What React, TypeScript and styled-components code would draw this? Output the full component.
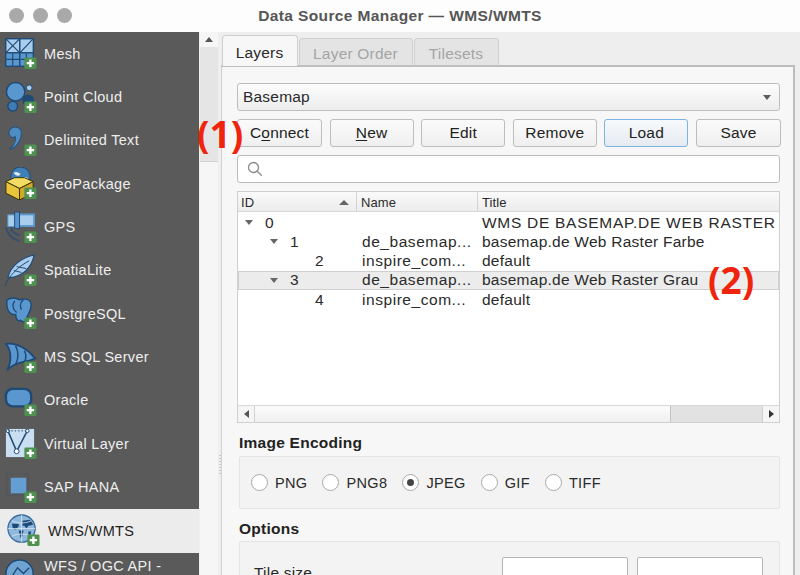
import React from "react";
import styled, { createGlobalStyle } from "styled-components";

const Global = createGlobalStyle`
  html, body { margin: 0; padding: 0; background: #f0f0f0; overflow: hidden; }
  * { box-sizing: border-box; }
`;

const Window = styled.div`
  position: relative;
  width: 800px;
  height: 575px;
  overflow: hidden;
  display: flex;
  flex-direction: column;
  font-family: "Liberation Sans", Arial, sans-serif;
  font-size: 15.5px;
  letter-spacing: 0.2px;
  color: #2a2a2a;
`;
const TitleBar = styled.header`
  position: relative;
  height: 32px;
  flex: none;
  display: flex;
  align-items: center;
  justify-content: center;
  background: #fdfdfd;
  color: #565656;
  font-weight: 700;
  font-size: 15.5px;
  letter-spacing: 0.38px;
`;
const Lights = styled.div`
  position: absolute;
  left: 9px;
  top: 8px;
  display: flex;
  gap: 9px;
`;
const Light = styled.span`
  width: 15px;
  height: 15px;
  border-radius: 50%;
  background: #a9a9a9;
`;
const Body = styled.div`
  flex: 1;
  min-height: 0;
  display: flex;
`;
const Sidebar = styled.nav`
  width: 199px;
  flex: none;
  background: #5a5a5a;
  overflow: hidden;
`;
const Item = styled.div<{ $active?: boolean }>`
  height: ${(p) => (p.$active ? "44px" : "43.35px")};
  display: flex;
  align-items: center;
  gap: ${(p) => (p.$active ? "8px" : "7px")};
  padding-left: ${(p) => (p.$active ? "7px" : "4px")};
  background: ${(p) => (p.$active ? "#ececec" : "transparent")};
  color: ${(p) => (p.$active ? "#1f1f1f" : "#eeeeee")};
  font-size: 14.5px;
  letter-spacing: 0.3px;
  line-height: 17px;
  white-space: nowrap;
  flex: none;
`;
const ItemLabel = styled.span`
  display: block;
  padding-top: 1px;
`;
const IconSvg = styled.svg`
  width: 33px;
  height: 33px;
  flex: none;
`;
const SideScroll = styled.div`
  width: 18px;
  flex: none;
  background: #f6f6f6;
  margin-left: 1px;
  display: flex;
  flex-direction: column;
`;
const ScrollUp = styled.div`
  height: 15px;
  display: flex;
  align-items: center;
  justify-content: center;
  &::before {
    content: "";
    border-left: 4.5px solid transparent;
    border-right: 4.5px solid transparent;
    border-bottom: 5px solid #555;
  }
`;
const ScrollThumb = styled.div`
  height: 115px;
  background: #e5e5e5;
  border-bottom: 1px solid #d2d2d2;
`;
const Splitter = styled.div`
  width: 3px;
  flex: none;
  background: #efefef;
  display: flex;
  justify-content: center;
`;
const Grip = styled.div`
  width: 2px;
  height: 20px;
  margin-top: 423px;
  background: repeating-linear-gradient(#c8c8c8 0 1px, transparent 1px 3px);
`;
const Main = styled.main`
  flex: 1;
  min-width: 0;
  background: #eeeeee;
  padding: 4px 5px 0 0;
  display: flex;
  flex-direction: column;
`;
const Tabs = styled.div`
  height: 30px;
  flex: none;
  display: flex;
  align-items: flex-end;
  gap: 1px;
  padding-left: 1px;
  position: relative;
  z-index: 1;
  margin-bottom: -1px;
`;
const Tab = styled.div<{ $active?: boolean; $w: number }>`
  width: ${(p) => p.$w}px;
  height: ${(p) => (p.$active ? "31px" : "28px")};
  padding: 3px 1px 0 0;
  display: flex;
  align-items: center;
  justify-content: center;
  color: ${(p) => (p.$active ? "#2a2a2a" : "#a4a4a4")};
  background: ${(p) => (p.$active ? "#f7f7f7" : "#e4e4e4")};
  border: 1px solid #cfcfcf;
  border-bottom: ${(p) => (p.$active ? "none" : "1px solid #c0c0c0")};
  border-radius: 4px 4px 0 0;
`;
const Pane = styled.section`
  flex: 1;
  min-height: 0;
  background: #f7f7f7;
  border: 1px solid #d0d0d0;
  border-top: 2px solid #bcbcbc;
  border-right: 2px solid #bcbcbc;
  border-bottom: none;
  padding: 16px 13px 0 15px;
  display: flex;
  flex-direction: column;
  overflow: hidden;
`;
const Combo = styled.div`
  height: 28px;
  flex: none;
  display: flex;
  align-items: center;
  justify-content: space-between;
  padding: 0 7px 0 5px;
  border: 1px solid #bdbdbd;
  border-radius: 3px;
  background: linear-gradient(#fcfcfc, #ededed);
  &::after {
    content: "";
    border-left: 4.5px solid transparent;
    border-right: 4.5px solid transparent;
    border-top: 5px solid #5c5c5c;
    margin-right: 1px;
  }
`;
const Buttons = styled.div`
  margin-top: 8px;
  width: 544px;
  flex: none;
  display: grid;
  grid-template-columns: 85px 84px 84px 84px 84px 85px;
  column-gap: 7.6px;
`;
const Button = styled.button<{ $primary?: boolean }>`
  height: 28px;
  padding: 0;
  font: inherit;
  letter-spacing: inherit;
  color: #222;
  border-radius: 3px;
  border: 1px solid ${(p) => (p.$primary ? "#7db3e0" : "#bdbdbd")};
  background: ${(p) => (p.$primary ? "linear-gradient(#f7f9fb, #e6ebf1)" : "linear-gradient(#fbfbfb, #efefef)")};
  display: flex;
  align-items: center;
  justify-content: center;
`;
const Mnemonic = styled.span`
  text-decoration: underline;
  text-underline-offset: 2px;
  text-decoration-thickness: 1px;
`;
const Search = styled.div`
  margin-top: 8px;
  height: 28px;
  flex: none;
  background: #fff;
  border: 1px solid #bdbdbd;
  border-radius: 3px;
  display: flex;
  align-items: center;
  padding-left: 9px;
  color: #8a8a8a;
`;
const Tree = styled.div`
  margin-top: 8px;
  height: 232px;
  flex: none;
  background: #fff;
  border: 1px solid #d0d0d0;
  display: flex;
  flex-direction: column;
`;
const Header = styled.div`
  height: 20px;
  flex: none;
  display: grid;
  grid-template-columns: 119px 121px 1fr;
  background: linear-gradient(#fafafa, #ececec);
  border-bottom: 1px solid #d8d8d8;
  font-size: 13px;
  letter-spacing: 0.1px;
  margin-bottom: 1px;
`;
const HeadCell = styled.div`
  display: flex;
  align-items: center;
  justify-content: space-between;
  padding: 1px 7px 0 3px;
  border-right: 1px solid #d4d4d4;
  &:nth-child(n + 2) { padding-left: 4px; }
  &:last-child { border-right: none; }
`;
const SortUp = styled.span`
  border-left: 5px solid transparent;
  border-right: 5px solid transparent;
  border-bottom: 5px solid #666;
`;
const Rows = styled.div`
  flex: 1;
  min-height: 0;
`;
const Row = styled.div<{ $sel?: boolean }>`
  height: 19.25px;
  display: grid;
  grid-template-columns: 120px 120px 1fr;
  align-items: center;
  white-space: nowrap;
  background: ${(p) => (p.$sel ? "#ececec" : "transparent")};
  box-shadow: ${(p) => (p.$sel ? "inset 0 0 0 1px #cfcfcf" : "none")};
`;
const IdCell = styled.div<{ $depth: number }>`
  display: flex;
  align-items: center;
  padding-left: ${(p) => 7 + p.$depth * 25}px;
`;
const Twisty = styled.span<{ $hidden?: boolean }>`
  width: 0;
  height: 0;
  flex: none;
  margin-right: 12px;
  border-left: 4.5px solid transparent;
  border-right: 4.5px solid transparent;
  border-top: 5px solid ${(p) => (p.$hidden ? "transparent" : "#666")};
`;
const NameCell = styled.div`
  padding-left: 4px;
  letter-spacing: 0.55px;
`;
const TitleCell = styled.div<{ $caps?: boolean }>`
  padding-left: 4px;
  letter-spacing: ${(p) => (p.$caps ? "0.72px" : "0.25px")};
`;
const HScroll = styled.div`
  height: 17px;
  flex: none;
  display: flex;
  border-top: 1px solid #d8d8d8;
`;
const HArrow = styled.div<{ $dir: "l" | "r" }>`
  width: 17px;
  flex: none;
  display: flex;
  align-items: center;
  justify-content: center;
  background: #f5f5f5;
  border-${(p) => (p.$dir === "l" ? "right" : "left")}: 1px solid #d0d0d0;
  &::before {
    content: "";
    border-top: 4.5px solid transparent;
    border-bottom: 4.5px solid transparent;
    ${(p) => (p.$dir === "l" ? "border-right: 5px solid #555;" : "border-left: 5px solid #333;")}
  }
`;
const HThumb = styled.div`
  width: 416px;
  flex: none;
  background: linear-gradient(#fbfbfb, #f0f0f0);
  border-right: 1px solid #c4c4c4;
`;
const HTrough = styled.div`
  flex: 1;
  background: #e2e2e2;
`;
const GroupLabel = styled.div<{ $top: number }>`
  font-weight: 700;
  font-size: 15.5px;
  letter-spacing: 0.25px;
  color: #222;
  margin: ${(p) => p.$top}px 0 0 2px;
  line-height: 17px;
`;
const GroupBox = styled.div`
  margin-left: 2px;
  background: #f3f3f3;
  border: 1px solid #e4e4e4;
  border-radius: 2px;
  flex: none;
`;
const EncodingBox = styled(GroupBox)`
  margin-top: 5px;
  height: 53px;
  display: flex;
  align-items: center;
  padding-left: 11px;
  gap: 15px;
  font-size: 14.5px;
  letter-spacing: 0.35px;
`;
const RadioItem = styled.label`
  display: flex;
  align-items: center;
  gap: 7px;
`;
const RadioDot = styled.span<{ $on?: boolean }>`
  width: 17px;
  height: 17px;
  border-radius: 50%;
  background: #fff;
  border: 1px solid #a8a8a8;
  display: flex;
  align-items: center;
  justify-content: center;
  &::after {
    content: "";
    width: 7px;
    height: 7px;
    border-radius: 50%;
    background: ${(p) => (p.$on ? "#444" : "transparent")};
  }
`;
const OptionsBox = styled(GroupBox)`
  margin-top: 4px;
  height: 60px;
  padding: 15px 16px 0 14px;
  display: flex;
  justify-content: space-between;
  align-items: flex-start;
`;
const TileLabel = styled.span`
  margin-top: 7px;
  line-height: 17px;
`;
const TileInputs = styled.div`
  display: flex;
  gap: 9px;
`;
const TileInput = styled.div`
  width: 126px;
  height: 30px;
  background: #fff;
  border: 1px solid #b4b4b4;
  border-radius: 2px;
`;
const Note = styled.span<{ $x: number; $y: number }>`
  position: absolute;
  left: ${(p) => p.$x}px;
  top: ${(p) => p.$y}px;
  font-family: "Open Sans", sans-serif;
  font-weight: 700;
  font-size: 37px;
  line-height: 40px;
  letter-spacing: 0;
  color: #f0240c;
`;

const Plus = () => (
  <g>
    <rect x="21" y="21" width="12.5" height="12" rx="1.5" fill="#4f9150" />
    <path d="M27.2 23.2v7.6M23.4 27h7.6" stroke="#fff" strokeWidth="2.4" />
  </g>
);
const DARK = "#1f4a75";
const MID = "#5b97cf";
const LIGHT = "#a9cdec";

const icons: Record<string, React.ReactNode> = {
  mesh: (
    <>
      <rect x="1" y="1" width="30" height="30" rx="1" fill={DARK} />
      <rect x="2.5" y="2.5" width="13" height="13" fill={LIGHT} />
      <rect x="17" y="2.5" width="12.5" height="13" fill={LIGHT} />
      <rect x="2.5" y="17" width="13" height="12.5" fill={MID} />
      <rect x="17" y="17" width="12.5" height="12.5" fill={MID} />
      <path d="M2.5 2.5l13 13M15.5 2.5l-13 13M29.5 2.5l-12.5 13M2.5 23h13M9 17v12.5M17 23h12M23 17v12" stroke={DARK} strokeWidth="1.2" fill="none" />
    </>
  ),
  cloud: (
    <>
      <circle cx="12" cy="11" r="9.5" fill={MID} stroke={DARK} strokeWidth="1.5" />
      <circle cx="26" cy="7" r="3" fill={LIGHT} stroke={DARK} />
      <circle cx="9" cy="26" r="5" fill="#3f7cb5" stroke={DARK} strokeWidth="1.5" />
      <circle cx="25" cy="20" r="6" fill={DARK} />
    </>
  ),
  text: (
    <path d="M5 9a6.500 6 0 0 1 13 0c0 7-4 14-11 17-1 .5-1.500-.5-.5-1 4-3 6-8 5-12-3 2-6.500 0-6.500-4z" fill="#4e8cc4" stroke="#24527f" strokeWidth="1.1" />
  ),
  gpkg: (
    <>
      <circle cx="17" cy="10" r="10" fill="#3f7fb8" stroke={DARK} />
      <path d="M10 6c3-2 5 0 7 1-1 3-5 3-7-1zM20 11c3-1 5 0 5 2-2 3-5 2-5-2z" fill="#dfeaf4" />
      <path d="M2 15l14 7v12L2 27z" fill="#e7c43a" stroke="#3a3000" />
      <path d="M30 15l-14 7v12l14-7z" fill="#d2a92a" stroke="#3a3000" />
      <path d="M2 15l9-4 10 0 9 4-14 7z" fill="#f3dc63" stroke="#3a3000" />
    </>
  ),
  gps: (
    <>
      <rect x="4" y="4" width="8" height="12" fill={LIGHT} stroke={MID} />
      <rect x="15" y="3.500" width="16" height="12" fill={LIGHT} stroke={MID} strokeWidth="2" />
      <rect x="11" y="1" width="5" height="17" fill={MID} stroke={DARK} />
      <path d="M2 17c1 6 6 12 14 14M7 17c1 4 4 7 9 8" stroke="#34506e" strokeWidth="2" fill="none" />
    </>
  ),
  spatia: (
    <>
      <path d="M4 24C7 12 18 4 31 1c-2 10-8 20-22 23z" fill={LIGHT} stroke={DARK} strokeWidth="1.2" />
      <path d="M1 33C4 24 14 13 26 7M10 17l8 2M13 13l10 2" stroke={DARK} strokeWidth="1" fill="none" />
    </>
  ),
  pg: (
    <>
      <path d="M3 3c5-3 10-2 13 0 5-2 12-1 12 5 0 8-4 10-5 15-1 3-4 3-6 1-2 2-5-1-5-6-5 1-10-3-9-15z" fill={MID} stroke={DARK} strokeWidth="1.5" />
      <path d="M11 4c-3 4-2 9 2 12M20 3c-3 2-4 6-2 10" stroke={DARK} strokeWidth="1.4" fill="none" />
    </>
  ),
  mssql: (
    <>
      <path d="M2 3c12-2 24 7 30 15-6 3-10 3-14 4-5 1-11 4-15 8 5-8 5-20-1-27z" fill={MID} stroke={DARK} strokeWidth="1.8" />
      <path d="M12 5c3 6 3 13 0 19M21 10c2 4 2 8 0 12" stroke={DARK} strokeWidth="1.5" fill="none" />
    </>
  ),
  oracle: <rect x="2" y="5" width="26" height="18" rx="7" fill={MID} stroke={DARK} strokeWidth="2.4" />,
  virtual: (
    <>
      <rect x="2" y="2" width="29" height="29" fill="#c9def0" />
      <path d="M4 4l9 21L24 4" stroke={DARK} strokeWidth="1.6" fill="none" />
      <circle cx="13" cy="25" r="2.5" fill="#fff" stroke={DARK} />
      <circle cx="4" cy="4" r="1.8" fill="#fff" stroke={DARK} />
      <circle cx="24" cy="4" r="1.8" fill="#fff" stroke={DARK} />
      <path d="M4 4h20" stroke={DARK} strokeDasharray="1.5 2" />
    </>
  ),
  hana: (
    <>
      <rect x="3" y="3" width="22" height="22" fill="none" stroke="#45525e" strokeDasharray="1.5 1.5" />
      <rect x="7" y="7" width="16" height="16" fill="#659ed3" />
    </>
  ),
  wms: (
    <>
      <circle cx="15" cy="15" r="14" fill="#8fb8dc" stroke="#3b6f9f" strokeWidth="1.4" />
      <path d="M5 10h7v3l-3 3-3-1zM16 7l8-1 3 5-5 1-2 3-2-3-2 0zM12 17h5l-1 5-2 3-1-4zM22 18h3l-1 4-2-1z" fill="#1d4a78" />
      <path d="M1 15h28M15 1v28M5 7c6 3 14 3 20 0M5 23c6-3 14-3 20 0" stroke="#dbe8f3" strokeWidth=".8" fill="none" />
    </>
  ),
  wfs: (
    <>
      <circle cx="16" cy="16" r="14" fill="#6fa3d2" stroke={DARK} strokeWidth="1.5" />
      <path d="M6 22l8-12 6 6 6-6" stroke={DARK} strokeWidth="1.4" fill="none" />
    </>
  ),
};

const items: { key: string; label: string; extra?: string; active?: boolean }[] = [
  { key: "mesh", label: "Mesh" },
  { key: "cloud", label: "Point Cloud" },
  { key: "text", label: "Delimited Text" },
  { key: "gpkg", label: "GeoPackage" },
  { key: "gps", label: "GPS" },
  { key: "spatia", label: "SpatiaLite" },
  { key: "pg", label: "PostgreSQL" },
  { key: "mssql", label: "MS SQL Server" },
  { key: "oracle", label: "Oracle" },
  { key: "virtual", label: "Virtual Layer" },
  { key: "hana", label: "SAP HANA" },
  { key: "wms", label: "WMS/WMTS", active: true },
  { key: "wfs", label: "WFS / OGC API -", extra: "Features" },
];

const rows = [
  { id: "0", depth: 0, twisty: true, name: "", title: "WMS DE BASEMAP.DE WEB RASTER", caps: true },
  { id: "1", depth: 1, twisty: true, name: "de_basemap...", title: "basemap.de Web Raster Farbe" },
  { id: "2", depth: 2, twisty: false, name: "inspire_com...", title: "default" },
  { id: "3", depth: 1, twisty: true, name: "de_basemap...", title: "basemap.de Web Raster Grau", sel: true },
  { id: "4", depth: 2, twisty: false, name: "inspire_com...", title: "default" },
];

const encodings = ["PNG", "PNG8", "JPEG", "GIF", "TIFF"];

export default function App() {
  return (
    <Window>
      <Global />
      <TitleBar>
        <Lights>
          <Light />
          <Light />
          <Light />
        </Lights>
        Data Source Manager — WMS/WMTS
      </TitleBar>
      <Body>
        <Sidebar>
          {items.map((it) => (
            <Item key={it.key} $active={it.active}>
              <IconSvg viewBox="0 0 34 34">
                {icons[it.key]}
                <Plus />
              </IconSvg>
              <ItemLabel>
                {it.label}
                {it.extra ? (
                  <>
                    <br />
                    {it.extra}
                  </>
                ) : null}
              </ItemLabel>
            </Item>
          ))}
        </Sidebar>
        <SideScroll>
          <ScrollUp />
          <ScrollThumb />
        </SideScroll>
        <Splitter>
          <Grip />
        </Splitter>
        <Main>
          <Tabs>
            <Tab $active $w={76}>Layers</Tab>
            <Tab $w={114}>Layer Order</Tab>
            <Tab $w={85}>Tilesets</Tab>
          </Tabs>
          <Pane>
            <Combo>Basemap</Combo>
            <Buttons>
              <Button>
                C<Mnemonic>o</Mnemonic>nnect
              </Button>
              <Button>
                <Mnemonic>N</Mnemonic>ew
              </Button>
              <Button>Edit</Button>
              <Button>Remove</Button>
              <Button $primary>Load</Button>
              <Button>Save</Button>
            </Buttons>
            <Search>
              <svg width="16" height="16" viewBox="0 0 16 16" fill="none" stroke="#8a8a8a" strokeWidth="1.3">
                <circle cx="6.500" cy="6.500" r="5" />
                <path d="M10.300 10.300l4.500 4.500" />
              </svg>
            </Search>
            <Tree>
              <Header>
                <HeadCell>
                  ID
                  <SortUp />
                </HeadCell>
                <HeadCell>Name</HeadCell>
                <HeadCell>Title</HeadCell>
              </Header>
              <Rows>
                {rows.map((r) => (
                  <Row key={r.id} $sel={r.sel}>
                    <IdCell $depth={r.depth}>
                      <Twisty $hidden={!r.twisty} />
                      {r.id}
                    </IdCell>
                    <NameCell>{r.name}</NameCell>
                    <TitleCell $caps={r.caps}>{r.title}</TitleCell>
                  </Row>
                ))}
              </Rows>
              <HScroll>
                <HArrow $dir="l" />
                <HThumb />
                <HTrough />
                <HArrow $dir="r" />
              </HScroll>
            </Tree>
            <GroupLabel $top={11}>Image Encoding</GroupLabel>
            <EncodingBox>
              {encodings.map((e) => (
                <RadioItem key={e}>
                  <RadioDot $on={e === "JPEG"} />
                  {e}
                </RadioItem>
              ))}
            </EncodingBox>
            <GroupLabel $top={11}>Options</GroupLabel>
            <OptionsBox>
              <TileLabel>Tile size</TileLabel>
              <TileInputs>
                <TileInput />
                <TileInput />
              </TileInputs>
            </OptionsBox>
          </Pane>
        </Main>
      </Body>
      <Note $x={197} $y={114}>(1)</Note>
      <Note $x={708} $y={260}>(2)</Note>
    </Window>
  );
}
